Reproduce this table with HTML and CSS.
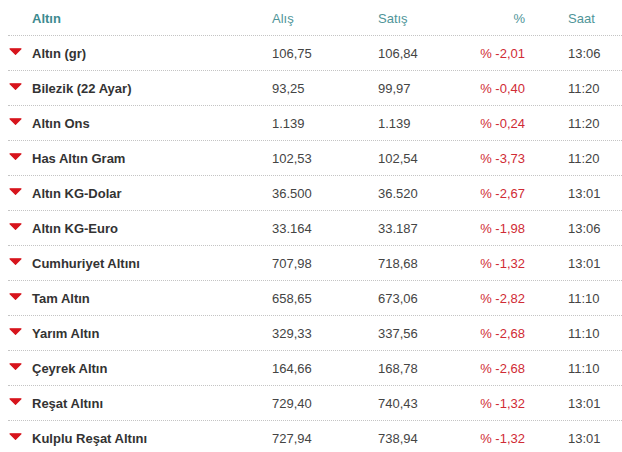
FILE: index.html
```html
<!DOCTYPE html>
<html lang="tr">
<head>
<meta charset="utf-8">
<link rel="stylesheet" href="styles.css">
</head>
<body>
<div class="table">
  <div class="row head">
    <div class="c-ic"></div>
    <div class="c-name">Altın</div>
    <div class="c-num">Alış</div>
    <div class="c-num">Satış</div>
    <div class="c-pct">%</div>
    <div class="c-time">Saat</div>
  </div>
  <div class="row"><div class="c-ic"><svg width="13" height="7" viewBox="0 0 13 7"><path d="M1 0.8 H12 L6.5 6.3 Z" fill="#d7141c" stroke="#d7141c" stroke-width="1.2" stroke-linejoin="round"/></svg></div><div class="c-name">Altın (gr)</div><div class="c-num">106,75</div><div class="c-num">106,84</div><div class="c-pct">% -2,01</div><div class="c-time">13:06</div></div>
  <div class="row"><div class="c-ic"><svg width="13" height="7" viewBox="0 0 13 7"><path d="M1 0.8 H12 L6.5 6.3 Z" fill="#d7141c" stroke="#d7141c" stroke-width="1.2" stroke-linejoin="round"/></svg></div><div class="c-name">Bilezik (22 Ayar)</div><div class="c-num">93,25</div><div class="c-num">99,97</div><div class="c-pct">% -0,40</div><div class="c-time">11:20</div></div>
  <div class="row"><div class="c-ic"><svg width="13" height="7" viewBox="0 0 13 7"><path d="M1 0.8 H12 L6.5 6.3 Z" fill="#d7141c" stroke="#d7141c" stroke-width="1.2" stroke-linejoin="round"/></svg></div><div class="c-name">Altın Ons</div><div class="c-num">1.139</div><div class="c-num">1.139</div><div class="c-pct">% -0,24</div><div class="c-time">11:20</div></div>
  <div class="row"><div class="c-ic"><svg width="13" height="7" viewBox="0 0 13 7"><path d="M1 0.8 H12 L6.5 6.3 Z" fill="#d7141c" stroke="#d7141c" stroke-width="1.2" stroke-linejoin="round"/></svg></div><div class="c-name">Has Altın Gram</div><div class="c-num">102,53</div><div class="c-num">102,54</div><div class="c-pct">% -3,73</div><div class="c-time">11:20</div></div>
  <div class="row"><div class="c-ic"><svg width="13" height="7" viewBox="0 0 13 7"><path d="M1 0.8 H12 L6.5 6.3 Z" fill="#d7141c" stroke="#d7141c" stroke-width="1.2" stroke-linejoin="round"/></svg></div><div class="c-name">Altın KG-Dolar</div><div class="c-num">36.500</div><div class="c-num">36.520</div><div class="c-pct">% -2,67</div><div class="c-time">13:01</div></div>
  <div class="row"><div class="c-ic"><svg width="13" height="7" viewBox="0 0 13 7"><path d="M1 0.8 H12 L6.5 6.3 Z" fill="#d7141c" stroke="#d7141c" stroke-width="1.2" stroke-linejoin="round"/></svg></div><div class="c-name">Altın KG-Euro</div><div class="c-num">33.164</div><div class="c-num">33.187</div><div class="c-pct">% -1,98</div><div class="c-time">13:06</div></div>
  <div class="row"><div class="c-ic"><svg width="13" height="7" viewBox="0 0 13 7"><path d="M1 0.8 H12 L6.5 6.3 Z" fill="#d7141c" stroke="#d7141c" stroke-width="1.2" stroke-linejoin="round"/></svg></div><div class="c-name">Cumhuriyet Altını</div><div class="c-num">707,98</div><div class="c-num">718,68</div><div class="c-pct">% -1,32</div><div class="c-time">13:01</div></div>
  <div class="row"><div class="c-ic"><svg width="13" height="7" viewBox="0 0 13 7"><path d="M1 0.8 H12 L6.5 6.3 Z" fill="#d7141c" stroke="#d7141c" stroke-width="1.2" stroke-linejoin="round"/></svg></div><div class="c-name">Tam Altın</div><div class="c-num">658,65</div><div class="c-num">673,06</div><div class="c-pct">% -2,82</div><div class="c-time">11:10</div></div>
  <div class="row"><div class="c-ic"><svg width="13" height="7" viewBox="0 0 13 7"><path d="M1 0.8 H12 L6.5 6.3 Z" fill="#d7141c" stroke="#d7141c" stroke-width="1.2" stroke-linejoin="round"/></svg></div><div class="c-name">Yarım Altın</div><div class="c-num">329,33</div><div class="c-num">337,56</div><div class="c-pct">% -2,68</div><div class="c-time">11:10</div></div>
  <div class="row"><div class="c-ic"><svg width="13" height="7" viewBox="0 0 13 7"><path d="M1 0.8 H12 L6.5 6.3 Z" fill="#d7141c" stroke="#d7141c" stroke-width="1.2" stroke-linejoin="round"/></svg></div><div class="c-name">Çeyrek Altın</div><div class="c-num">164,66</div><div class="c-num">168,78</div><div class="c-pct">% -2,68</div><div class="c-time">11:10</div></div>
  <div class="row"><div class="c-ic"><svg width="13" height="7" viewBox="0 0 13 7"><path d="M1 0.8 H12 L6.5 6.3 Z" fill="#d7141c" stroke="#d7141c" stroke-width="1.2" stroke-linejoin="round"/></svg></div><div class="c-name">Reşat Altını</div><div class="c-num">729,40</div><div class="c-num">740,43</div><div class="c-pct">% -1,32</div><div class="c-time">13:01</div></div>
  <div class="row"><div class="c-ic"><svg width="13" height="7" viewBox="0 0 13 7"><path d="M1 0.8 H12 L6.5 6.3 Z" fill="#d7141c" stroke="#d7141c" stroke-width="1.2" stroke-linejoin="round"/></svg></div><div class="c-name">Kulplu Reşat Altını</div><div class="c-num">727,94</div><div class="c-num">738,94</div><div class="c-pct">% -1,32</div><div class="c-time">13:01</div></div>
</div>
</body>
</html>
```

FILE: styles.css
```css
html, body {
  margin: 0;
  padding: 0;
  background: #ffffff;
}
body {
  font-family: "Liberation Sans", Arial, sans-serif;
  font-size: 13px;
  color: #444444;
  overflow: hidden;
}
.table {
  padding-left: 8px;
  padding-top: 1px;
}
.row {
  display: grid;
  grid-template-columns: 24px 240px 106px 82px 65px 1fr;
  align-items: center;
  height: 35px;
  box-sizing: border-box;
  border-bottom: 1px dotted #c4c4c4;
}
.c-ic {
  display: flex;
  align-items: center;
  padding-left: 1px;
  padding-bottom: 3px;
}
.c-ic svg {
  display: block;
}
.c-name {
  font-weight: bold;
  color: #333333;
}
.c-num {
  color: #444444;
}
.c-pct {
  text-align: right;
  color: #d02b35;
}
.c-time {
  padding-left: 43px;
  color: #444444;
}
.head {
  color: #3d8a8f;
}
.head .c-name {
  color: #3d8a8f;
}
.head .c-num,
.head .c-pct,
.head .c-time {
  color: #4f9599;
}
```
